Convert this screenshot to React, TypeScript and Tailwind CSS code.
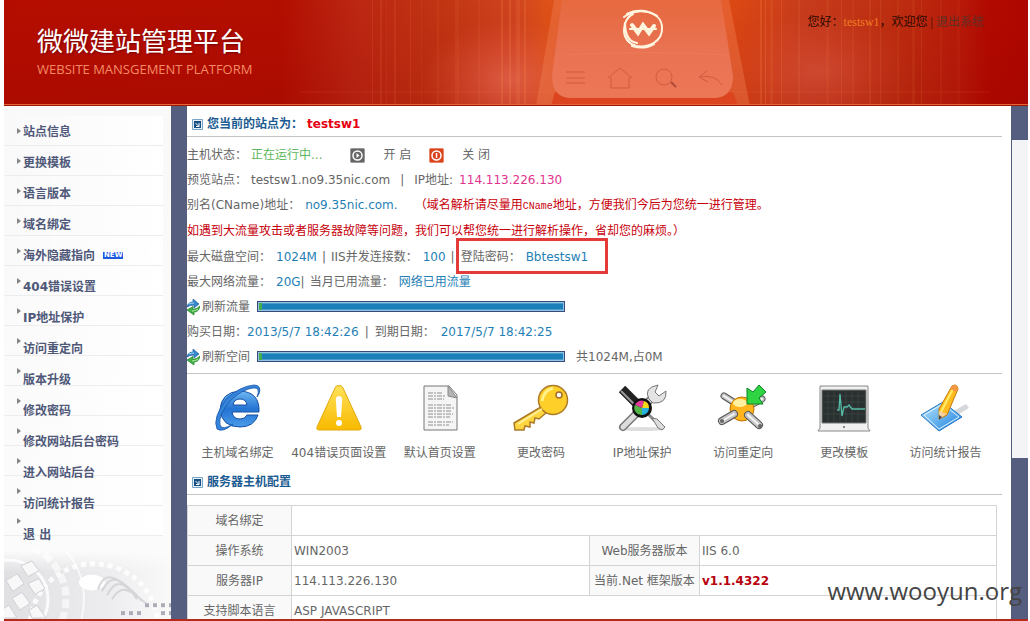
import React from "react";

const menu = [
  "站点信息", "更换模板", "语言版本", "域名绑定", "海外隐藏指向", "404错误设置", "IP地址保护",
  "访问重定向", "版本升级", "修改密码", "修改网站后台密码", "进入网站后台", "访问统计报告", "退 出",
];

const stripes = [
  [372, 1, 0.12], [380, 2, 0.1], [386, 1, 0.08], [394, 2, 0.1], [410, 1, 0.12], [421, 1, 0.07],
  [437, 2, 0.08], [455, 4, 0.08], [478, 2, 0.07], [501, 2, 0.18], [509, 2, 0.18], [516, 4, 0.12], [524, 2, 0.18],
  [760, 2, 0.18], [765, 1, 0.22], [770, 3, 0.1], [781, 1, 0.16], [798, 2, 0.1], [826, 3, 0.08], [841, 1, 0.12],
  [852, 2, 0.08], [869, 2, 0.1], [880, 1, 0.12], [897, 2, 0.08], [912, 3, 0.08], [921, 1, 0.12], [940, 2, 0.06], [957, 3, 0.05],
];

function Banner() {
  return (
    <svg className="absolute inset-0 h-full w-full" viewBox="4 0 1024 106" preserveAspectRatio="none" aria-hidden="true">
      <defs>
        <linearGradient id="base" x1="0" x2="1" y1="0" y2="0">
          <stop offset="0" stopColor="#b40d00" /><stop offset=".27" stopColor="#b20e00" />
          <stop offset=".34" stopColor="#bb2612" /><stop offset=".43" stopColor="#c13513" />
          <stop offset=".5" stopColor="#d04420" /><stop offset=".53" stopColor="#de5218" />
          <stop offset=".62" stopColor="#e65120" /><stop offset=".71" stopColor="#dd4914" />
          <stop offset=".78" stopColor="#c73c1c" /><stop offset=".87" stopColor="#bd2e10" />
          <stop offset=".93" stopColor="#b81c0a" /><stop offset=".96" stopColor="#b20a00" /><stop offset="1" stopColor="#ae0700" />
        </linearGradient>
        <linearGradient id="shade" x1="0" x2="0" y1="0" y2="1">
          <stop offset="0" stopColor="#900" stopOpacity="0" /><stop offset="1" stopColor="#8a0000" stopOpacity=".2" />
        </linearGradient>
        <radialGradient id="glow"><stop offset="0" stopColor="#ff9080" stopOpacity=".4" /><stop offset="1" stopColor="#ff7060" stopOpacity="0" /></radialGradient>
        <linearGradient id="screen" x1="0" x2="0" y1="0" y2="1">
          <stop offset="0" stopColor="#e6693f" /><stop offset=".5" stopColor="#e97252" /><stop offset="1" stopColor="#ec7756" />
        </linearGradient>
      </defs>
      <rect x="4" width="1024" height="106" fill="url(#base)" />
      <rect x="4" width="1024" height="106" fill="url(#shade)" />
      <ellipse cx="510" cy="80" rx="90" ry="60" fill="url(#glow)" />
      <ellipse cx="820" cy="72" rx="95" ry="60" fill="url(#glow)" opacity=".6" />
      {stripes.map(([x, w, o]) => <rect key={x} x={x} width={w} height="106" fill="#ff9a50" opacity={o} />)}
      <path d="M554 0L536 106H750L729 0Z" fill="#f08055" opacity=".4" />
      <path d="M555 92L551 106H738L733 92Z" fill="#dc4420" />
      <path d="M562 0L552 76Q552 98 572 98H713Q733 98 733 76L721 0Z" fill="url(#screen)" />
      <path d="M564 55Q645 50 728 55" stroke="#f08a65" fill="none" opacity=".3" />
      <g fill="none" stroke="#d35b41" strokeWidth="1">
        <path d="M566 72H585M566 78H585M566 83H585" />
        <path d="M608 78L620 68L632 78M611 77V88H629V77" />
        <circle cx="664" cy="77" r="8" /><path d="M671 82L676 87" strokeWidth="2" stroke="#b04a36" />
        <path d="M707 71L699 77L708 82M700 77Q715 74 722 85" />
      </g>
      <g fill="none" stroke="#fff5df" strokeLinecap="round" strokeLinejoin="round">
        <path d="M624 17C636 7 661 10 662 27C663 42 648 48 636 46C619 40 622 19 633 14" strokeWidth="2" />
        <path d="M627 14C636 9 648 10 657 16M632 46C642 49 649 47 654 44M625 23C625 36 630 42 637 43" strokeWidth="2.2" />
        <path d="M632 25L638 33L643 25L649 33L654 26" strokeWidth="4" strokeLinejoin="miter" />
        <path d="M630 29H656" strokeWidth="2.2" />
      </g>
      <path d="M300 92H990" stroke="#ff8c58" opacity=".12" />
      <path d="M4 104.500H1028" stroke="#e66537" />
      <path d="M4 105.500H1028" stroke="#9e1608" />
    </svg>
  );
}

function SidebarArt() {
  return (
    <svg viewBox="0 0 167 70" preserveAspectRatio="none" className="block h-[70px] w-full" aria-hidden="true">
      <defs>
        <linearGradient id="art" x2="1"><stop stopColor="#e0e0e3" /><stop offset=".6" stopColor="#ececee" /><stop offset="1" stopColor="#f9f9fa" /></linearGradient>
        <linearGradient id="fade" x2="0" y2="1"><stop stopColor="#fcfcfc" /><stop offset="1" stopColor="#fcfcfc" stopOpacity="0" /></linearGradient>
      </defs>
      <rect width="167" height="70" fill="url(#art)" />
      <rect width="167" height="22" fill="url(#fade)" />
      <g fill="none" stroke="#fff">
        <circle cx="4" cy="50" r="40" strokeWidth="3" opacity=".8" />
        <circle cx="4" cy="50" r="58" strokeWidth="7" strokeDasharray="9 4" opacity=".6" />
        <circle cx="4" cy="50" r="76" strokeWidth="2" opacity=".7" />
        <circle cx="90" cy="78" r="64" strokeWidth="5" strokeDasharray="5 4" opacity=".8" />
      </g>
      <ellipse cx="88" cy="33" rx="13" ry="8" fill="#fff" />
      <g fill="#f8f8f9" stroke="#d0d0d5">
        <path d="M2 31L13 24L20 34L9 42ZM17 16L28 11L35 21L24 27ZM8 49L18 43L26 54L16 61ZM24 34L35 29L41 39L31 45ZM-3 61L5 56L13 69H-3ZM25 61L33 56L42 69H28Z" />
      </g>
      <path d="M98 42Q106 24 118 33T138 52M103 46Q112 28 123 38T142 54M94 40Q100 22 113 30T133 50M108 50Q117 35 127 43" fill="none" stroke="#d5d5da" strokeWidth="2" />
      <g fill="#adadb8">
        {[141, 149, 157, 165].map((x) => <rect key={x} x={x} y="54" width="4" height="4" />)}
        {[117, 125, 133, 157, 165].map((x) => <rect key={x} x={x} y="62" width="4" height="4" />)}
      </g>
    </svg>
  );
}

function SectionTitle({ children }: { children: React.ReactNode }) {
  return (
    <h2 className="mr-[9px] flex items-center gap-1 border-b border-[#c4c4c4] pl-[5px] text-xs font-bold leading-6 text-[#1b5b92]">
      <svg width="11" height="11" viewBox="0 0 11 11" aria-hidden="true">
        <path d="M.5.5H10.500V10.500H.5Z" fill="#e5eff8" stroke="#79a5ca" />
        <path d="M2 2H9V9H2Z" fill="#164f84" /><path d="M3.500 4L7 7.500M7 4V7.500H4" stroke="#fff" fill="none" />
      </svg>
      {children}
    </h2>
  );
}

function PowerIcon({ on }: { on?: boolean }) {
  return (
    <svg width="15" height="15" viewBox="0 0 15 15" aria-hidden="true">
      <rect x=".5" y=".5" width="14" height="14" rx="1" fill={on ? "#666" : "#d9441f"} stroke={on ? "#999" : "#e98564"} />
      <circle cx="7.500" cy="7.500" r="4.500" fill="none" stroke="#fff" strokeWidth="1.500" />
      <path d={on ? "M6.500 5V10L9.500 7.500Z" : "M6.800 5H8.300V10H6.800Z"} fill="#fff" />
    </svg>
  );
}

function Refresh() {
  return (
    <svg width="13" height="17" viewBox="0 0 13 17" aria-hidden="true">
      <path d="M0 8Q1 3 6 3V0L12 5L7 9V6Q3 6 0 8Z" fill="#3689cf" stroke="#1c5e9c" strokeWidth=".7" />
      <path d="M13 7Q12 13 7 13V16L0 11L6 7.500V10.500Q10 10 13 7Z" fill="#43b244" stroke="#1c7d2c" strokeWidth=".7" />
      <path d="M2 5Q4 4 7 4" stroke="#a9d8f6" fill="none" /><path d="M5 12Q9 12 11 10" stroke="#b5ebaa" fill="none" />
    </svg>
  );
}

function Meter({ label }: { label: string }) {
  return (
    <div role="progressbar" aria-label={label} aria-valuenow={0} aria-valuemin={0} aria-valuemax={100}
      className="mb-[3px] flex h-[11px] w-[308px] border border-[#3b4a7c] bg-[#8fc3e2] p-px">
      <span className="w-[3px] bg-[#48ac4c]" />
      <span className="flex-1 border-y border-[#4c9cca] bg-[#1b7fb9]" />
    </div>
  );
}

const tools: [string, React.ReactNode][] = [
  ["主机域名绑定", <>
    <defs><linearGradient id="ie" x2="0" y2="1"><stop stopColor="#6fb9f2" /><stop offset=".5" stopColor="#2373d3" /><stop offset="1" stopColor="#4a9bea" /></linearGradient></defs>
    <path d="M45 28H18Q19 35 26 35Q31 35 33 31H44Q40 43 26 43Q8 43 6 26Q7 8 26 7Q46 8 45 28ZM19 21H33Q32 15 26 15Q20 15 19 21Z" fill="url(#ie)" stroke="#174fa5" fillRule="evenodd" />
    <path d="M13 14Q27 2 40 1Q48 1 45 10L43 13Q47 3 39 4Q29 5 17 16Q4 30 6 41Q8 47 19 40Q9 49 3 45Q-2 34 13 14Z" fill="#3484dc" stroke="#1b56a7" strokeWidth=".8" />
  </>],
  ["404错误页面设置", <>
    <defs><linearGradient id="warn" x2="0" y2="1"><stop stopColor="#ffe25a" /><stop offset="1" stopColor="#f9b900" /></linearGradient></defs>
    <path d="M24 2Q26 0 28 4L46 43Q47 46 44 46H4Q1 46 2 43L20 4Q22 0 24 2Z" fill="url(#warn)" stroke="#e3a90b" />
    <path d="M24 12Q28 12 27 18L26 33H22L21 18Q20 12 24 12Z" fill="#fff" /><circle cx="24" cy="39" r="3" fill="#fff" />
  </>],
  ["默认首页设置", <>
    <path d="M8 2H33L41 11V46H8Z" fill="#f5f5f5" stroke="#777" /><path d="M32 2V12L41 14Z" fill="#b5b5b5" stroke="#888" />
    <path d="M12 9H27M12 12H30M12 15H28M12 21H36M12 24H38M12 27H35M12 30H37M12 33H34M12 38H37M12 41H33" stroke="#8f8f8f" strokeDasharray="5 1 2 1" />
  </>],
  ["更改密码", <>
    <path d="M24 23L-3 39L-2 46H7L8 42L13 43V38L17 39L18 34L22 35L30 28" fill="#ffd640" stroke="#ad7b28" strokeWidth="1.500" />
    <circle cx="36" cy="16" r="14.500" fill="#ffcf29" stroke="#ad7b28" strokeWidth="1.500" />
    <path d="M25 17Q27 6 36 4" fill="none" stroke="#fff087" strokeWidth="3" /><path d="M1 40L25 25" stroke="#fff09e" strokeWidth="2" />
    <circle cx="42" cy="11" r="3" fill="#fff" stroke="#a36d29" strokeWidth="1.500" />
  </>],
  ["IP地址保护", <>
    <ellipse cx="24" cy="45" rx="23" ry="2" fill="#ddd" />
    <path d="M5 43L35 13" stroke="#777" strokeWidth="8" strokeLinecap="round" /><path d="M5 43L35 13" stroke="#ddd" strokeWidth="5" strokeLinecap="round" />
    <path d="M31 15Q25 4 40 1L37 8L41 12L48 7Q49 20 35 19Z" fill="#e4e4e4" stroke="#777" />
    <path d="M4 5L19 20" stroke="#222" strokeWidth="9" /><path d="M3 7L17 21" stroke="#999" strokeWidth="2" />
    <path d="M27 27L37 37" stroke="#888" strokeWidth="3" /><path d="M34 34L39 35L47 43L44 46L40 44Z" fill="#ddd" stroke="#777" />
    <circle cx="24" cy="24" r="10" fill="#111" /><path d="M24 24L17 21A7 7 0 0 1 26 17Z" fill="#e43a9b" />
    <path d="M24 24L26 17A7 7 0 0 1 31 24Z" fill="#f5d819" /><path d="M24 24H31A7 7 0 0 1 24 31Z" fill="#26b3e0" /><path d="M24 24V31A7 7 0 0 1 17 21Z" fill="#53b646" />
  </>],
  ["访问重定向", <>
    {["M5 12L16 19", "M32 21L43 15"].map((d) => <g key={d} strokeLinecap="round"><path d={d} stroke="#555" strokeWidth="7" /><path d={d} stroke="#c4c4c4" strokeWidth="5" /><path d={d} stroke="#f4f4f4" strokeWidth="2" /></g>)}
    <circle cx="23" cy="25" r="12" fill="#ffb51b" stroke="#bf7400" /><ellipse cx="21" cy="19" rx="7" ry="4" fill="#fff1a1" />
    {["M3 37L15 30", "M29 31L40 41"].map((d) => <g key={d} strokeLinecap="round"><path d={d} stroke="#555" strokeWidth="8" /><path d={d} stroke="#c4c4c4" strokeWidth="6" /><path d={d} stroke="#f4f4f4" strokeWidth="2" /></g>)}
    <circle cx="3" cy="37" r="2" fill="#666" /><circle cx="41" cy="42" r="2" fill="#666" />
    <path d="M28 4L34 8L40 1L47 8L40 14L44 20H28Z" fill="#2fd443" stroke="#108024" />
  </>],
  ["更改模板", <>
    <path d="M0 2H48V44L50 47H-2L0 44Z" fill="#f0f0f0" stroke="#888" /><path d="M2 6H46V39H2Z" fill="#29302f" stroke="#777" />
    <path d="M8 6V39M14 6V39M20 6V39M26 6V39M32 6V39M38 6V39M3 12H45M3 18H45M3 24H45M3 30H45" stroke="#4b5250" strokeWidth=".5" />
    <path d="M17 26H19L20 10L22 32L24 23H27L29 21L32 25H45" fill="none" stroke="#55bca7" strokeWidth="1.300" /><circle cx="24" cy="43" r="1" fill="#666" />
  </>],
  ["访问统计报告", <>
    <defs><linearGradient id="pad" x2="1" y2="1"><stop stopColor="#bbe9ff" /><stop offset="1" stopColor="#187ddd" /></linearGradient></defs>
    <path d="M29 29L45 20L48 24L35 32Z" fill="#d6d7db" />
    <path d="M0 31L22 18L41 33L18 47Z" fill="url(#pad)" stroke="#2479c9" /><path d="M3 31L22 20L38 33L18 45Z" fill="none" stroke="#e1f5ff" />
    <path d="M18 25L31 2Q36 -1 37 5L26 31L18 35Z" fill="#ffbc21" stroke="#c77a0a" /><path d="M20 28L33 3" stroke="#ffed6a" strokeWidth="2" />
    <path d="M31 2Q36 -1 37 5L35 8L29 5Z" fill="#f29743" /><path d="M18 27L26 30L18 35Z" fill="#f5d0a1" /><path d="M18 31L21 33L18 36Z" fill="#474a5c" />
  </>],
];

const blue = "text-[#1f7fb6]";
const th = "border border-[#d4d4d4] bg-[#f9f9f9] font-normal";
const td = "border border-[#d4d4d4] px-[2px] text-left";

export default function App() {
  return (
    <div className="relative flex h-screen flex-col overflow-hidden bg-white pl-1 pr-[2px] font-['DejaVu_Sans','Noto_Sans_CJK_SC',sans-serif] text-xs text-[#666]">
      <header className="relative h-[106px] shrink-0">
        <Banner />
        <div className="relative flex items-start justify-between pl-[33px] pr-11">
          <div className="pt-[22px]">
            <h1 className="font-['Noto_Sans_CJK_SC',sans-serif] text-[26px] leading-9 text-white [text-shadow:1px_1px_2px_#700]">微微建站管理平台</h1>
            <p className="pt-px font-['Open_Sans',sans-serif] text-[13px] leading-5 text-[#f58a65]">WEBSITE MANSGEMENT PLATFORM</p>
          </div>
          <p className="pt-3 font-['Liberation_Serif','Noto_Sans_CJK_SC',serif] leading-5 text-[#2b0900]">
            您好：<span className="text-[#ef7d22]">testsw1</span>，欢迎您 | <a href="#logout" className="text-[#5d3025]">退出系统</a>
          </p>
        </div>
      </header>

      <div className="flex min-h-0 flex-1 border-b-2 border-[#b52a1a]">
        <aside className="flex w-[167px] shrink-0 flex-col justify-between bg-gradient-to-b from-[#f9f9fa] to-[#fcfcfc]">
          <nav className="grid">
            <div className="col-start-1 row-start-1 pr-2 pt-[10px]" aria-hidden="true">
              {menu.map((m) => (
                <div key={m} className="flex h-[30px] items-center border-b border-[#ededee] bg-gradient-to-r from-transparent to-white pl-[13px]">
                  <svg width="4" height="6" viewBox="0 0 4 6"><path d="M0 0L4 3L0 6Z" fill="#858585" /></svg>
                </div>
              ))}
            </div>
            <ul className="col-start-1 row-start-1 pl-[19px] pt-[10px] font-bold text-[#4f5878]">
              {menu.map((m, i) => (
                <li key={m} className="flex h-[31px] items-center gap-2">
                  <a href={"#menu" + i}>{m}</a>
                  {i === 4 && <span className="bg-[#1c5be0] px-px text-[7px] leading-[7px] text-white">NEW</span>}
                </li>
              ))}
            </ul>
          </nav>
          <SidebarArt />
        </aside>
        <div className="w-4 shrink-0 bg-[#565e7f]" />

        <main className="min-w-0 flex-1 overflow-hidden pt-[6px]">
          <SectionTitle>您当前的站点为： <span className="text-[#e60012]">testsw1</span></SectionTitle>
          <section className="mr-[9px] whitespace-nowrap border-b border-[#c4c4c4] pb-[3px] pt-[6px] leading-[25px]">
            <div className="flex items-center gap-1">
              <span>主机状态：</span><span className="text-[#5bb75b]">正在运行中...</span>
              <button type="button" className="ml-6 flex items-center gap-[18px]"><PowerIcon on />开 启</button>
              <button type="button" className="ml-[14px] flex items-center gap-[18px]"><PowerIcon />关 闭</button>
            </div>
            <div className="flex gap-1">
              <span>预览站点：</span><span>testsw1.no9.35nic.com</span><span className="px-[6px]">|</span><span className="pr-[2px]">IP地址:</span><span className="text-[#e0338f]">114.113.226.130</span>
            </div>
            <div className="flex gap-[5px]">
              <span>别名(CName)地址：</span><span className={blue}>no9.35nic.com.</span>
              <span className="pl-3 text-[#c7000b]">（域名解析请尽量用<span className="font-['Liberation_Mono',monospace] text-[10px]">CName</span>地址，方便我们今后为您统一进行管理。</span>
            </div>
            <p className="text-[#c7000b]">如遇到大流量攻击或者服务器故障等问题，我们可以帮您统一进行解析操作，省却您的麻烦。）</p>
            <div className="mt-px flex gap-[5px]">
              <span>最大磁盘空间：</span><span className={blue}>1024M</span><span>|</span><span>IIS并发连接数：</span><span className={blue}>100</span><span>|</span>
              <span className="relative flex gap-[5px] pl-px">
                <span className="absolute -left-1 -right-5 -top-[7px] h-9 border-[3px] border-[#e33a3a]" />
                <span>登陆密码：</span><span className={blue}>Bbtestsw1</span>
              </span>
            </div>
            <div className="flex gap-[5px]">
              <span>最大网络流量：</span><span className={blue}>20G<span className="text-[#666]">|</span></span><span>当月已用流量：</span><a href="#traffic" className={blue}>网络已用流量</a>
            </div>
            <div className="flex items-center gap-[7px]">
              <button type="button" className="flex items-center gap-[2px]"><Refresh />刷新流量</button><Meter label="流量" />
            </div>
            <div className="flex gap-[6px]">
              <span>购买日期：<span className={blue}>2013/5/7 18:42:26</span></span><span>|</span><span>到期日期：</span><span className={blue}>2017/5/7 18:42:25</span>
            </div>
            <div className="flex items-center gap-[7px]">
              <button type="button" className="flex items-center gap-[2px]"><Refresh />刷新空间</button><Meter label="空间" /><span className="pl-1">共1024M,占0M</span>
            </div>
          </section>

          <section className="mr-[15px] grid grid-cols-8 pt-[10px]">
            {tools.map(([name, drawing], i) => (
              <a key={name} href={"#tool" + i} className="flex flex-col items-center gap-2 whitespace-nowrap">
                <svg width="48" height="49" viewBox="0 0 48 49" className="overflow-visible" aria-hidden="true">{drawing}</svg>
                <span className="leading-6">{name}</span>
              </a>
            ))}
          </section>

          <div className="pt-[5px]"><SectionTitle>服务器主机配置</SectionTitle></div>
          <div className="mr-[14px] pt-[10px]">
            <table className="w-full table-fixed border-collapse">
              <colgroup><col className="w-[104px]" /><col /><col className="w-[110px]" /><col className="w-[297px]" /></colgroup>
              <tbody>
                <tr className="h-[30px]"><th className={th}>域名绑定</th><td className={td} colSpan={3} /></tr>
                <tr className="h-[30px]"><th className={th}>操作系统</th><td className={td}>WIN2003</td><th className={th}>Web服务器版本</th><td className={td}>IIS 6.0</td></tr>
                <tr className="h-[30px]"><th className={th}>服务器IP</th><td className={td}>114.113.226.130</td><th className={th + " whitespace-nowrap"}>当前.Net 框架版本</th><td className={td + " font-bold text-[#b8000b]"}>v1.1.4322</td></tr>
                <tr className="h-[30px]"><th className={th}>支持脚本语言</th><td className={td} colSpan={3}>ASP JAVASCRIPT</td></tr>
              </tbody>
            </table>
          </div>
        </main>
        <div className="w-[17px] shrink-0 bg-[#565e7f] pt-[34px]"><div className="ml-px h-[318px] bg-[#f4f4f7]" /></div>
      </div>
      <div className="absolute bottom-3 right-2 font-['Open_Sans',sans-serif] text-[24px] leading-9 text-[#444]">www.wooyun.org</div>
    </div>
  );
}
